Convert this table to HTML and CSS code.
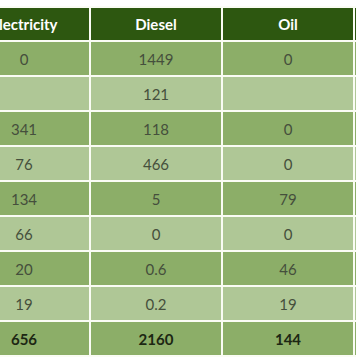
FILE: index.html
```html
<!DOCTYPE html>
<html>
<head>
<meta charset="utf-8">
<link rel="stylesheet" href="styles.css">
</head>
<body>
<div class="clip">
<table class="energy">
  <thead>
    <tr><th>Electricity</th><th>Diesel</th><th>Oil</th><th></th></tr>
  </thead>
  <tbody>
    <tr class="dark"><td>0</td><td>1449</td><td>0</td><td></td></tr>
    <tr class="light"><td></td><td>121</td><td></td><td></td></tr>
    <tr class="dark"><td>341</td><td>118</td><td>0</td><td></td></tr>
    <tr class="light"><td>76</td><td>466</td><td>0</td><td></td></tr>
    <tr class="dark"><td>134</td><td>5</td><td>79</td><td></td></tr>
    <tr class="light"><td>66</td><td>0</td><td>0</td><td></td></tr>
    <tr class="dark"><td>20</td><td>0.6</td><td>46</td><td></td></tr>
    <tr class="light"><td>19</td><td>0.2</td><td>19</td><td></td></tr>
    <tr class="dark total"><td>656</td><td>2160</td><td>144</td><td></td></tr>
  </tbody>
</table>
</div>
</body>
</html>
```
FILE: styles.css
```css
html, body {
  margin: 0;
  padding: 0;
  background: #ffffff;
}
.clip {
  width: 356px;
  height: 364px;
  overflow: hidden;
}
.energy {
  width: 530px;
  margin: 6px 0 0 -43px;
  border-collapse: separate;
  border-spacing: 2px;
  background: #fafcf4;
  font-family: "Lato", "Open Sans", sans-serif;
  font-size: 15px;
  table-layout: fixed;
}
.energy th, .energy td {
  width: 130px;
  padding: 0;
  text-align: center;
}
.energy th {
  height: 32px;
  background: #2d5710;
  color: #ffffff;
  font-weight: 700;
  font-size: 15px;
}
.energy td {
  height: 33px;
  color: #454f3c;
}
.dark td {
  background: #8cae68;
}
.light td {
  background: #afc796;
}
.total td {
  font-weight: 700;
  color: #1c2713;
}
```
